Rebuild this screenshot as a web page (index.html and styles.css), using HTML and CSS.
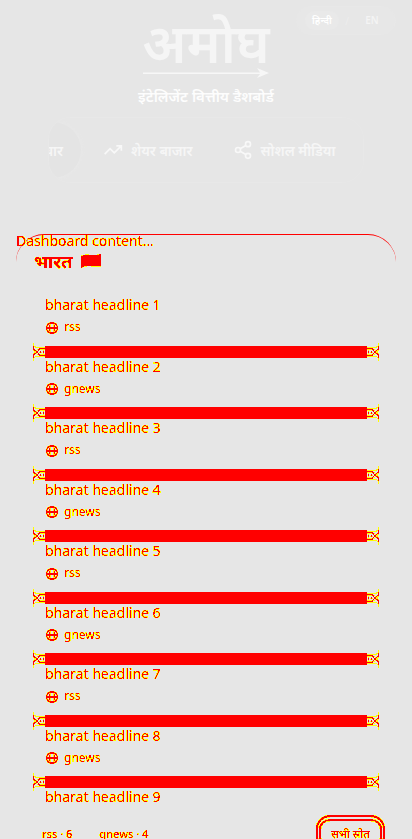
FILE: index.html
```html
<!DOCTYPE html>
<html lang="hi">
<head>
<meta charset="utf-8">
<meta name="viewport" content="width=device-width, initial-scale=1">
<title>अमोघ</title>
<link rel="stylesheet" href="styles.css">
</head>
<body>
<svg class="defs" aria-hidden="true">
  <filter id="edge" x="-5%" y="-20%" width="110%" height="140%" color-interpolation-filters="sRGB">
    <feColorMatrix values="0 0 0 0 1  0 0 0 1 0  0 0 0 0 0  0 0 0 1 0"/>
    <feComponentTransfer>
      <feFuncG type="discrete" tableValues="1 1 1 1 1 1 0 0 0 0"/>
      <feFuncA type="discrete" tableValues="0 1 1 1 1 1 1 1 1 1 1 1 1 1 1 1 1 1 1 1 1 1 1 1"/>
    </feComponentTransfer>
  </filter>
  <symbol id="globe" viewBox="0 0 12 12"><g fill="none" stroke="red" stroke-width="1"><circle cx="6" cy="6" r="5.4" stroke-width="1.1"/><ellipse cx="6" cy="6" rx="2.5" ry="5"/><path d="M1 6h10" stroke-width="1.3"/></g></symbol>
  <symbol id="cap" viewBox="0 0 12 18"><path d="M0.5 0V3.5Q4 5 12 4.5M0.5 18V14.5Q4 13 12 13.5M0 5Q4 9 0 13M0 7L5 12M0 11L5 6M5 6.500H12M5 11.500H12M6 9H9M10.500 7V11" fill="none" stroke="#ff0"/><path d="M0.500 3V6L4 9L0.500 12V15M4 9L7 5.500H12M4 9L7 12.500H12M7.500 8V10M10.500 8V10" fill="none" stroke="red"/></symbol>
</svg>
<header class="top">
  <svg class="logo" viewBox="0 0 132 72" role="img" aria-label="अमोघ">
    <text x="66" y="55" text-anchor="middle" class="word">अमोघ</text>
    <path d="M3 64.500H120L117 60L129 65L117 70L120 66H3Z" fill="#f7f7f7"/>
  </svg>
  <p class="tagline">इंटेलिजेंट वित्तीय डैशबोर्ड</p>
  <div class="lang">
    <button class="on" type="button">हिन्दी</button><span>/</span><button type="button">EN</button>
  </div>
</header>
<nav class="tabs">
  <a class="current" href="#news">चार</a>
  <a href="#market"><svg viewBox="0 0 24 24"><path d="M2 17L8.500 10.500L13.500 15.500L22 7M16 7H22V13"/></svg>शेयर बाजार</a>
  <a href="#social"><svg viewBox="0 0 24 24"><circle cx="18" cy="5" r="3"/><circle cx="6" cy="12" r="3"/><circle cx="18" cy="19" r="3"/><path d="M8.600 13.500L15.400 17.500M15.400 6.500L8.600 10.500"/></svg>सोशल मीडिया</a>
</nav>
<main class="panel">
  <p class="note ink">Dashboard content...</p>
  <h1 class="ink">भारत <svg viewBox="0 0 20 14"><path d="M0 2Q5 0 9 1T20 0V12Q14 13 10 12T0 14Z" fill="red"/></svg></h1>
  <ul class="news">
    <li><div class="ink"><h2>bharat headline 1</h2><p><svg><use href="#globe"/></svg>rss</p></div><div class="bar"><svg><use href="#cap"/></svg><i></i><svg class="flip"><use href="#cap"/></svg></div></li>
    <li><div class="ink"><h2>bharat headline 2</h2><p><svg><use href="#globe"/></svg>gnews</p></div><div class="bar"><svg><use href="#cap"/></svg><i></i><svg class="flip"><use href="#cap"/></svg></div></li>
    <li><div class="ink"><h2>bharat headline 3</h2><p><svg><use href="#globe"/></svg>rss</p></div><div class="bar"><svg><use href="#cap"/></svg><i></i><svg class="flip"><use href="#cap"/></svg></div></li>
    <li><div class="ink"><h2>bharat headline 4</h2><p><svg><use href="#globe"/></svg>gnews</p></div><div class="bar"><svg><use href="#cap"/></svg><i></i><svg class="flip"><use href="#cap"/></svg></div></li>
    <li><div class="ink"><h2>bharat headline 5</h2><p><svg><use href="#globe"/></svg>rss</p></div><div class="bar"><svg><use href="#cap"/></svg><i></i><svg class="flip"><use href="#cap"/></svg></div></li>
    <li><div class="ink"><h2>bharat headline 6</h2><p><svg><use href="#globe"/></svg>gnews</p></div><div class="bar"><svg><use href="#cap"/></svg><i></i><svg class="flip"><use href="#cap"/></svg></div></li>
    <li><div class="ink"><h2>bharat headline 7</h2><p><svg><use href="#globe"/></svg>rss</p></div><div class="bar"><svg><use href="#cap"/></svg><i></i><svg class="flip"><use href="#cap"/></svg></div></li>
    <li><div class="ink"><h2>bharat headline 8</h2><p><svg><use href="#globe"/></svg>gnews</p></div><div class="bar"><svg><use href="#cap"/></svg><i></i><svg class="flip"><use href="#cap"/></svg></div></li>
    <li><div class="ink"><h2>bharat headline 9</h2></div></li>
  </ul>
  <footer class="sources ink"><span>rss · 6</span><span>gnews · 4</span><button type="button">सभी स्रोत</button></footer>
</main>
</body>
</html>
```
FILE: styles.css
```css
* { box-sizing: border-box; margin: 0; padding: 0; }
html { height: 100%; overflow: hidden; }
body { height: 100%; overflow: hidden; background: #e6e6e6; color: #fafafa; font-family: "Noto Sans", "Noto Sans Devanagari", sans-serif; }
button { font: inherit; color: inherit; background: none; border: 0; }
.defs { position: absolute; width: 0; height: 0; }
.top { position: relative; padding-top: 8px; height: 117px; text-align: center; }
.logo { display: block; width: 132px; height: 72px; margin: 0 auto; overflow: visible; }
.word { font-size: 54px; font-weight: 600; fill: #f5f5f5; }
.tagline { font-size: 15px; line-height: 20px; font-weight: 600; margin: 6px 0 0; color: #fdfdfd; }
.lang { position: absolute; top: 6px; right: 16px; width: 100px; height: 29px; padding: 0 6px 0 8px; border: 1px solid #e8e8e8; border-radius: 16px; background: #e7e7e7; display: flex; align-items: center; justify-content: space-between; font-size: 10px; }
.lang button { width: 34px; height: 19px; line-height: 19px; border-radius: 10px; font-weight: 600; color: #f4f4f4; }
.lang .on { background: #e9e9e9; color: #fff; }
.lang span { color: #ededed; }
.tabs { margin: 0 48px; height: 66px; border: 1px solid #e8e8e8; border-radius: 22px; display: flex; align-items: center; overflow: hidden; font-size: 14px; font-weight: 600; white-space: nowrap; }
.tabs a { color: #f6f6f6; text-decoration: none; display: flex; align-items: center; gap: 8px; margin-right: 40px; }
.tabs svg { width: 20px; height: 20px; fill: none; stroke: #f8f8f8; stroke-width: 2; }
.tabs .current { flex: none; width: 32px; height: 56px; padding-right: 18px; margin-right: 22px; justify-content: flex-end; background: #e4e4e4; border-radius: 0 28px 28px 0; box-shadow: 0 0 4px #eaeaea; }
.panel { margin: 51px 16px 0; position: relative; color: red; }
.panel::before { content: ""; position: absolute; inset: 0 0 auto; height: 28px; border-top: 1px solid red; border-radius: 28px 28px 0 0; }
.ink { filter: url(#edge); }
.note { font-size: 14px; line-height: 14px; }
h1 { margin: 0 18px; font-size: 18px; line-height: 26px; font-weight: 700; }
h1 svg { width: 20px; height: 14px; margin-left: 4px; }
.news { list-style: none; margin: 21px 17px 0; }
.news h2 { font-size: 14px; font-weight: 400; line-height: 20px; padding-left: 12px; }
.news p { display: flex; align-items: center; gap: 6px; padding-left: 13px; margin-top: 2px; font-size: 12px; line-height: 1.625; }
.news p svg { width: 12px; height: 12px; margin-top: 2px; }
.bar { display: flex; align-items: center; height: 12px; margin: 9px 0 -1px; }
.bar svg { flex: none; width: 12px; height: 18px; shape-rendering: crispEdges; }
.bar i { flex: 1; height: 12px; background: red; }
.flip { transform: scaleX(-1); }
.sources { display: flex; align-items: center; gap: 27px; margin: 8px 11px 0 26px; font-size: 11px; font-weight: 500; }
.sources button { margin-left: auto; width: 69px; height: 36px; border: 4px double red; border-width: 6px 5px; border-radius: 14px; font-size: 11px; }
```
